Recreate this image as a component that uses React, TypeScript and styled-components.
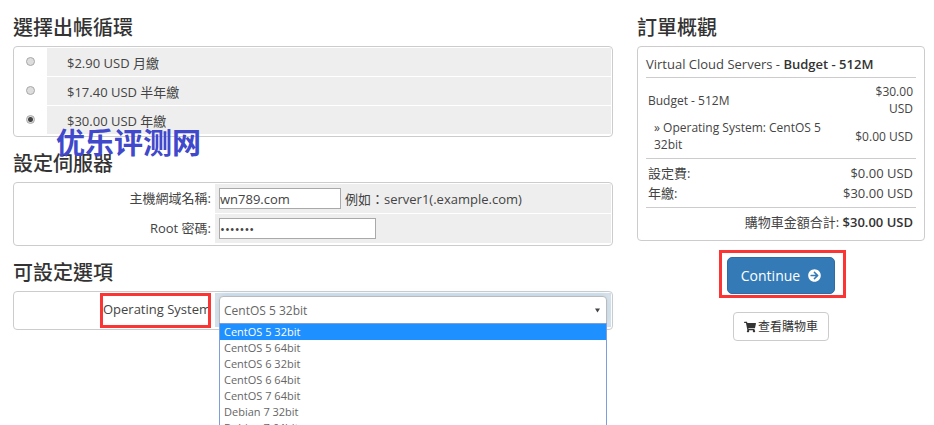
import React, { useState } from "react";
import styled, { createGlobalStyle, css } from "styled-components";
import { FaArrowCircleRight, FaShoppingCart } from "react-icons/fa";

const GlobalStyle = createGlobalStyle`
  * { box-sizing: border-box; }
  body {
    margin: 0;
    background: #fff;
    color: #444;
    font-family: "Open Sans", "Noto Sans CJK TC", sans-serif;
    font-size: 13px;
    line-height: 18px;
  }
  input, select, button { font-family: inherit; color: inherit; }
`;

const Page = styled.div`
  display: grid;
  grid-template-columns: minmax(0, 600fr) minmax(0, 288fr);
  gap: 24px;
  align-items: start;
  height: 100vh;
  overflow: hidden;
  padding: 17px 9px 0 13px;
`;

const Column = styled.div`
  display: flex;
  flex-direction: column;
  gap: 16px;
`;

const Section = styled.section`
  position: relative;
`;

const Heading = styled.h2`
  margin: 0 0 7px;
  color: #333;
  font-size: 20px;
  font-weight: 500;
  line-height: 22px;
`;

const Panel = styled.div`
  display: grid;
  gap: 1px;
  padding: 1px 1px 2px;
  border: 1px solid #ccc;
  border-radius: 4px;
`;

const CycleRow = styled.label`
  display: grid;
  grid-template-columns: 32px 1fr;
  height: 28px;
`;

const CycleMark = styled.span`
  display: flex;
  padding: 9px 0 0 11px;
`;

const Radio = styled.input`
  appearance: none;
  width: 9px;
  height: 9px;
  margin: 0;
  border: 1px solid #a8a8a8;
  border-radius: 50%;
  background: #ddd;
  &:checked {
    background: radial-gradient(circle, #444 0 2px, #ddd 3px);
  }
`;

const CycleText = styled.span`
  padding: 6px 20px 4px;
  background: #eee;
`;

const Watermark = styled.div`
  position: absolute;
  left: 43px;
  bottom: -20px;
  z-index: 1;
  color: #4048cc;
  font-family: "Noto Sans CJK SC", sans-serif;
  font-size: 29px;
  font-weight: 700;
  line-height: 32px;
  white-space: nowrap;
  pointer-events: none;
`;

const FieldRow = styled.div<{ $tall?: boolean }>`
  display: grid;
  grid-template-columns: 199px 1fr;
  gap: 1px;
  height: ${(p) => (p.$tall ? 34 : 29)}px;
`;

const FieldLabel = styled.label`
  position: relative;
  display: flex;
  align-items: center;
  justify-content: flex-end;
  padding: 0 3px 2px 0;
  white-space: nowrap;
`;

const FieldCell = styled.div`
  position: relative;
  display: flex;
  align-items: center;
  gap: 4px;
  padding: 0 4px;
  background: #eee;
`;

const TextBox = styled.input<{ $wide?: boolean }>`
  width: ${(p) => (p.$wide ? 157 : 122)}px;
  height: 21px;
  padding: 1px 0;
  border: 1px solid #a9a9a9;
  border-radius: 0;
  background: #fff;
  font-size: 13px;
  outline: none;
`;

const redFrame = css`
  position: absolute;
  border: 3px solid #fb3434;
  pointer-events: none;
`;

const LabelFrame = styled.span`
  ${redFrame}
  inset: 0 3px -1px 85px;
`;

const SystemCell = styled(FieldCell)`
  padding: 3px 4px;
  box-shadow: inset 0 0 6px #c5d9e8;
`;

const SystemSelect = styled.select`
  appearance: none;
  width: 100%;
  height: 28px;
  padding: 0 4px;
  border: 1px solid #bbb;
  border-radius: 4px 4px 0 0;
  background: #fff;
  color: #666;
  font-size: 12px;
  outline: none;
  box-shadow: 0 0 6px rgba(102, 160, 210, 0.5);
`;

const SelectArrow = styled.svg`
  position: absolute;
  right: 11px;
  top: 15px;
  pointer-events: none;
`;

const Menu = styled.ul`
  position: absolute;
  top: 30px;
  left: 4px;
  right: 4px;
  margin: 0;
  padding: 0;
  list-style: none;
  border: 1px solid #7a9fdc;
  background: #fff;
`;

const MenuItem = styled.li<{ $active: boolean }>`
  height: 16px;
  padding: 0 4px;
  background: ${(p) => (p.$active ? "#1e90ff" : "#fff")};
  color: ${(p) => (p.$active ? "#fff" : "#666")};
  font-size: 11px;
  line-height: 16px;
`;

const Summary = styled.div`
  padding: 8px 8px 7px;
  border: 1px solid #ccc;
  border-radius: 4px;
`;

const Product = styled.div`
  padding-bottom: 4px;
  border-bottom: 1px solid #ccc;
  line-height: 18px;
  & strong { color: #333; font-weight: 600; }
`;

const PriceTable = styled.table`
  width: 100%;
  table-layout: fixed;
  border-collapse: separate;
  border-spacing: 0;
  margin: 4px 0;
  font-size: 12px;
  line-height: 17px;
`;

const ItemCell = styled.td<{ $option?: boolean }>`
  padding: 1px 2px 1px ${(p) => (p.$option ? 8 : 2)}px;
`;

const PriceCell = styled.td`
  width: 65px;
  padding: 1px 3px 1px 0;
  text-align: right;
`;

const Totals = styled.div`
  padding: 4px 3px 4px 2px;
  border-top: 1px solid #ccc;
  border-bottom: 1px solid #ccc;
`;

const TotalLine = styled.div`
  display: flex;
  justify-content: space-between;
  line-height: 20px;
`;

const GrandTotal = styled.div`
  padding: 4px 3px 1px;
  text-align: right;
  line-height: 20px;
  & strong { color: #333; font-weight: 600; }
`;

const Actions = styled.div`
  display: flex;
  flex-direction: column;
  align-items: center;
  gap: 18px;
`;

const ContinueSlot = styled.div`
  position: relative;
`;

const ContinueFrame = styled.span`
  ${redFrame}
  inset: -7px -11px -4px -8px;
`;

const ContinueButton = styled.button`
  display: flex;
  align-items: center;
  gap: 8px;
  height: 37px;
  padding: 0 13px;
  border: 1px solid #2e6da4;
  border-radius: 5px;
  background: #337ab7;
  color: #fff;
  font-size: 14px;
`;

const CartLink = styled.a`
  display: flex;
  align-items: center;
  gap: 2px;
  height: 29px;
  padding: 0 10px;
  border: 1px solid #ccc;
  border-radius: 4px;
  color: #333;
  font-size: 12px;
  text-decoration: none;
`;

const cycles = ["$2.90 USD 月繳", "$17.40 USD 半年繳", "$30.00 USD 年繳"];
const systems = [
  "CentOS 5 32bit",
  "CentOS 5 64bit",
  "CentOS 6 32bit",
  "CentOS 6 64bit",
  "CentOS 7 64bit",
  "Debian 7 32bit",
  "Debian 7 64bit",
];

export default function App() {
  const [cycle, setCycle] = useState(2);
  const [system, setSystem] = useState(systems[0]);

  return (
    <>
      <GlobalStyle />
      <Page>
        <Column>
          <Section>
            <Heading>選擇出帳循環</Heading>
            <Panel>
              {cycles.map((text, i) => (
                <CycleRow key={text}>
                  <CycleMark>
                    <Radio type="radio" name="cycle" checked={cycle === i} onChange={() => setCycle(i)} />
                  </CycleMark>
                  <CycleText>{text}</CycleText>
                </CycleRow>
              ))}
            </Panel>
            <Watermark>优乐评测网</Watermark>
          </Section>

          <Section>
            <Heading>設定伺服器</Heading>
            <Panel>
              <FieldRow>
                <FieldLabel htmlFor="hostname">主機網域名稱:</FieldLabel>
                <FieldCell>
                  <TextBox id="hostname" type="text" defaultValue="wn789.com" />
                  <span>例如：server1(.example.com)</span>
                </FieldCell>
              </FieldRow>
              <FieldRow>
                <FieldLabel htmlFor="rootpw">Root 密碼:</FieldLabel>
                <FieldCell>
                  <TextBox id="rootpw" type="password" defaultValue="example" $wide />
                </FieldCell>
              </FieldRow>
            </Panel>
          </Section>

          <Section>
            <Heading>可設定選項</Heading>
            <Panel>
              <FieldRow $tall>
                <FieldLabel htmlFor="system">
                  Operating System
                  <LabelFrame />
                </FieldLabel>
                <SystemCell>
                  <SystemSelect id="system" value={system} onChange={(e) => setSystem(e.target.value)}>
                    {systems.map((name) => (
                      <option key={name}>{name}</option>
                    ))}
                  </SystemSelect>
                  <SelectArrow width="5" height="5" viewBox="0 0 5 5" aria-hidden="true">
                    <path d="M0 0.5h5L2.5 4.5z" fill="#444" />
                  </SelectArrow>
                  <Menu role="listbox" aria-label="Operating System">
                    {systems.map((name) => (
                      <MenuItem
                        key={name}
                        role="option"
                        aria-selected={name === system}
                        $active={name === system}
                        onClick={() => setSystem(name)}
                      >
                        {name}
                      </MenuItem>
                    ))}
                  </Menu>
                </SystemCell>
              </FieldRow>
            </Panel>
          </Section>
        </Column>

        <Column>
          <Section>
            <Heading>訂單概觀</Heading>
            <Summary>
              <Product>
                Virtual Cloud Servers - <strong>Budget - 512M</strong>
              </Product>
              <PriceTable>
                <tbody>
                  <tr>
                    <ItemCell>Budget - 512M</ItemCell>
                    <PriceCell>$30.00 USD</PriceCell>
                  </tr>
                  <tr>
                    <ItemCell $option>» Operating System: CentOS 5 32bit</ItemCell>
                    <PriceCell>$0.00 USD</PriceCell>
                  </tr>
                </tbody>
              </PriceTable>
              <Totals>
                <TotalLine>
                  <span>設定費:</span>
                  <span>$0.00 USD</span>
                </TotalLine>
                <TotalLine>
                  <span>年繳:</span>
                  <span>$30.00 USD</span>
                </TotalLine>
              </Totals>
              <GrandTotal>
                購物車金額合計: <strong>$30.00 USD</strong>
              </GrandTotal>
            </Summary>
          </Section>
          <Actions>
            <ContinueSlot>
              <ContinueButton type="button">
                Continue <FaArrowCircleRight size={13} />
              </ContinueButton>
              <ContinueFrame />
            </ContinueSlot>
            <CartLink href="#cart">
              <FaShoppingCart size={12} /> 查看購物車
            </CartLink>
          </Actions>
        </Column>
      </Page>
    </>
  );
}
